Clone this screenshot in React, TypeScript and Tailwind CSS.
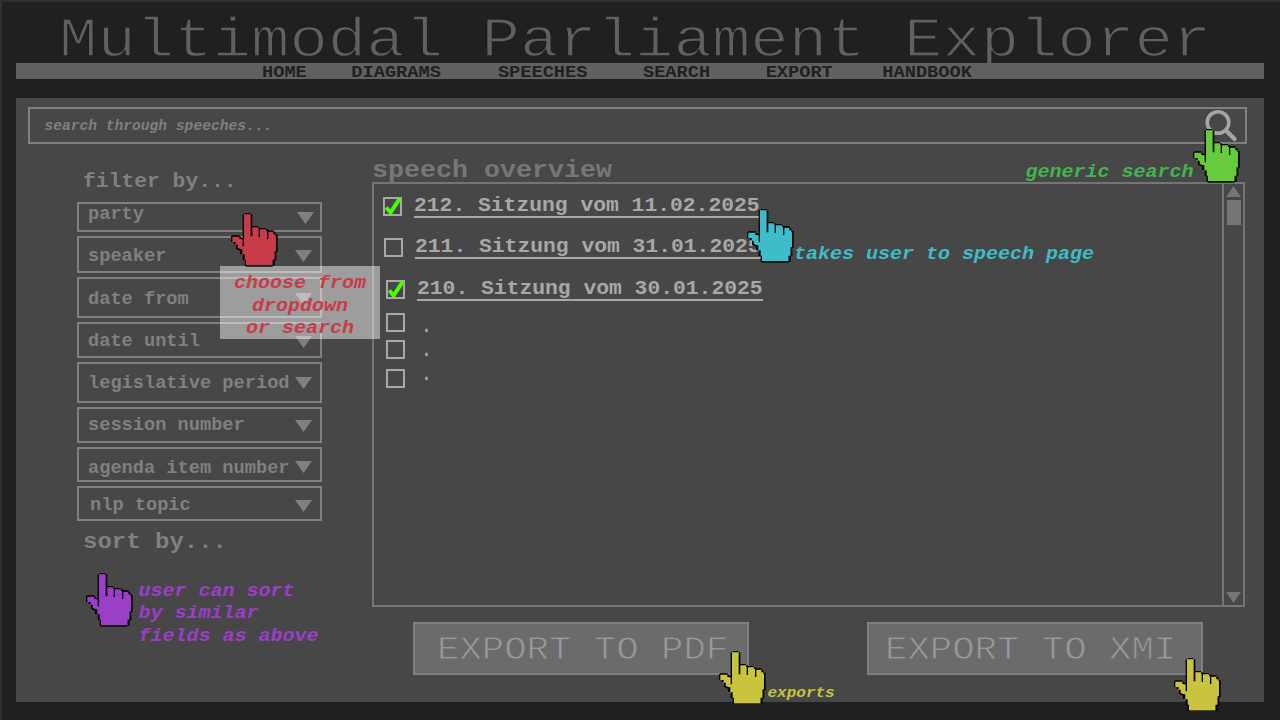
import React from "react";

const mono = "font-['Courier_New','Liberation_Mono',monospace]";

const navItems = [
  { label: "HOME", gap: "ml-[246px]" },
  { label: "DIAGRAMS", gap: "ml-[44.5px]" },
  { label: "SPEECHES", gap: "ml-[57px]" },
  { label: "SEARCH", gap: "ml-[55.5px]" },
  { label: "EXPORT", gap: "ml-[55.5px]" },
  { label: "HANDBOOK", gap: "ml-[49.5px]" },
];

const filters = [
  { label: "party", box: "h-[30px] pl-[9px] pr-[6px]", text: "", arrow: "mt-[8px]" },
  { label: "speaker", box: "h-[37px] pl-[9px] pr-[8px]", text: "mt-[8px]", arrow: "mt-[12px]" },
  { label: "date from", box: "h-[41px] pl-[9px] pr-[8px]", text: "mt-[10px]", arrow: "mt-[14px]" },
  { label: "date until", box: "h-[36px] pl-[9px] pr-[8px]", text: "mt-[7px]", arrow: "mt-[12px]" },
  { label: "legislative period", box: "h-[41px] pl-[9px] pr-[8px]", text: "mt-[9px]", arrow: "mt-[13px]" },
  { label: "session number", box: "h-[36px] pl-[9px] pr-[8px]", text: "mt-[6px]", arrow: "mt-[11px]" },
  { label: "agenda item number", box: "h-[35px] pl-[9px] pr-[8px]", text: "mt-[9px]", arrow: "mt-[12px]" },
  { label: "nlp topic", box: "h-[35px] pl-[11px] pr-[8px]", text: "mt-[7px]", arrow: "mt-[12px]" },
];

const sessions = [
  { label: "212. Sitzung vom 11.02.2025", checked: true, row: "mt-[9px] ml-[9px]", link: "ml-[12px]" },
  { label: "211. Sitzung vom 31.01.2025", checked: false, row: "mt-[16px] ml-[10px]", link: "ml-[12px]" },
  { label: "210. Sitzung vom 30.01.2025", checked: true, row: "mt-[17px] ml-[12px]", link: "ml-[12px]" },
];

const emptyRows = [
  { row: "mt-[8px]", dot: "mt-[1px]" },
  { row: "mt-[8px]", dot: "mt-[-2px]" },
  { row: "mt-[10px]", dot: "mt-[-7px]" },
];

function Hand({ color, className, open }: { color: string; className: string; open?: boolean }) {
  return (
    <svg viewBox="0 0 140 162" className={`absolute h-[54px] w-[46.67px] ${className}`}>
      <path
        fill={color}
        d="M38 3H61V41H84V47H110V55H130V62H137V118H131V142H125V157H44V141H37V125H29V109H18V95H10V87H3V69H27V75H38Z"
      />
      <path
        fill="#000"
        d="M41 0H58V4H41ZM35 4H39V100H35ZM59 4H64V70H59ZM64 39H81V43H64ZM81 43H87V47H81ZM83 47H87V72H83ZM87 45H105V49H87ZM105 49H112V54H105ZM108 54H112V78H108ZM112 52H128V56H112ZM127 56H133V64H127ZM133 62H137V68H133ZM135 66H140V117H135ZM131 115H136V142H131ZM125 140H131V158H125ZM41 140H45V158H41ZM35 124H41V141H35ZM27 109H34V124H27ZM25 108H30V114H25ZM15 95H20V108H15ZM19 106H25V111H19ZM8 87H14V94H8ZM0 69H4V87H0ZM3 67H26V71H3ZM25 71H30V78H25ZM29 75H36V79H29Z"
      />
      {!open && <path fill="#000" d="M44 157H125V161H44Z" />}
    </svg>
  );
}

function Checkbox({ checked }: { checked?: boolean }) {
  return (
    <span className="relative block h-[19px] w-[19px] shrink-0 border-2 border-[#a8a8a8]">
      {checked && (
        <svg viewBox="0 0 19 19" className="absolute -top-[2px] -left-[2px] h-[19px] w-[19px] overflow-visible">
          <path d="M3.2 10.5L7.6 15.6L16.9 1.4" fill="none" stroke="#48ff00" strokeWidth="3.9" />
        </svg>
      )}
    </span>
  );
}

function Triangle({ className, up }: { className: string; up?: boolean }) {
  return (
    <svg viewBox="0 0 17 12" preserveAspectRatio="none" className={`block shrink-0 ${className}`}>
      <path d={up ? "M0 12H17L8.5 0Z" : "M0 0H17L8.5 12Z"} fill="currentColor" />
    </svg>
  );
}

export default function App() {
  return (
    <div
      className={`relative h-[720px] w-[1280px] overflow-hidden border-t-2 border-l-2 border-[#303030] bg-[#202020] pr-[16px] pl-[14px] whitespace-pre ${mono}`}
    >
      <header>
        <div className="h-[61px] pl-[43px]">
          <h1 className="scale-y-[.88] text-[64px] leading-[79px] text-[#606060] [-webkit-text-stroke:1.6px_#202020]">
            Multimodal Parliament Explorer
          </h1>
        </div>
        <nav className="relative flex h-[16px] bg-[#606060] text-[18.67px] leading-[18px] font-bold text-[#202020]">
          {navItems.map((n) => (
            <a key={n.label} className={`block scale-y-[.93] ${n.gap}`}>
              {n.label}
            </a>
          ))}
        </nav>
      </header>

      <main className="mt-[19px] h-[604px] bg-[#474747] pt-[9px]">
        <div className="ml-[12px] flex h-[37px] w-[1219px] justify-between border-2 border-[#808080] pr-[7px] pl-[14.5px]">
          <span className="block scale-y-[.95] text-[14.6px] leading-[34px] font-bold text-[#808080] italic">
            search through speeches...
          </span>
          <svg viewBox="0 0 34 34" className="h-[34px] w-[34px] overflow-visible">
            <circle cx="14" cy="13.5" r="10.8" fill="none" stroke="#a5a5a5" strokeWidth="3.6" />
            <path d="M22 21.5L30.5 30" stroke="#a5a5a5" strokeWidth="4.4" strokeLinecap="round" />
          </svg>
        </div>

        <div className="flex">
          <aside className="ml-[61px] w-[245px] text-[#808080]">
            <h2 className="mt-[22px] ml-[6px] h-[36px] text-[21.33px] leading-[30px] font-bold">
              <span className="block scale-y-[.94]">filter by...</span>
            </h2>
            <div className="flex flex-col gap-[4px]">
              {filters.map((f) => (
                <div key={f.label} className={`flex justify-between border-2 border-[#808080] ${f.box}`}>
                  <span className={`block h-[20px] scale-y-[.94] text-[18.67px] leading-[20px] font-bold ${f.text}`}>
                    {f.label}
                  </span>
                  <Triangle className={`h-[12px] w-[17px] ${f.arrow}`} />
                </div>
              ))}
            </div>
            <h2 className="mt-[5px] ml-[6px] scale-y-[.94] text-[24px] leading-[32px] font-bold">sort by...</h2>
          </aside>

          <section className="ml-[50px] w-[873px]">
            <h2 className="mt-[9px] h-[29px] text-[26.67px] leading-[37px] font-bold text-[#777]">
              <span className="block scale-y-[.92]">speech overview</span>
            </h2>
            <div className="flex h-[425px] border-2 border-[#757575]">
              <div className="flex-1 overflow-hidden pt-[4px] text-[#a8a8a8]">
                {sessions.map((s) => (
                  <div key={s.label} className={`flex h-[25px] ${s.row}`}>
                    <Checkbox checked={s.checked} />
                    <a className={`-mt-[5px] block h-[26px] border-b-2 border-[#a8a8a8] ${s.link}`}>
                      <span className="block scale-y-[.95] text-[21.33px] leading-[26px] font-bold">{s.label}</span>
                    </a>
                  </div>
                ))}
                {emptyRows.map((r, i) => (
                  <div key={i} className={`ml-[12px] flex h-[19px] ${r.row}`}>
                    <Checkbox />
                    <span className={`ml-[15px] block text-[21.33px] leading-[24px] ${r.dot}`}>.</span>
                  </div>
                ))}
              </div>
              <div className="flex w-[21px] flex-col items-center border-l-2 border-[#757575] text-[#757575]">
                <Triangle up className="mt-[2px] h-[11px] w-[15px]" />
                <div className="mt-[3px] h-[25px] w-[14px] bg-[#757575]" />
                <Triangle className="mt-auto mb-[2px] h-[11px] w-[15px]" />
              </div>
            </div>
            <div className="mt-[15px] ml-[41px] flex gap-[118px] text-[37.33px] leading-[53px] text-[#999]">
              <button className="block h-[53px] w-[336px] border-2 border-[#808080] bg-[#6b6b6b] pl-[22px] text-left">
                <span className="block scale-y-[.89] [-webkit-text-stroke:.9px_#6b6b6b]">EXPORT TO PDF</span>
              </button>
              <button className="block h-[53px] w-[336px] border-2 border-[#808080] bg-[#6b6b6b] pl-[16px] text-left">
                <span className="block scale-y-[.89] [-webkit-text-stroke:.9px_#6b6b6b]">EXPORT TO XMI</span>
              </button>
            </div>
          </section>
        </div>
      </main>

      <div className="absolute top-[264px] left-[218px] h-[73px] w-[160px] bg-white/47 pt-[6px] text-center text-[20px] leading-[22.5px] font-bold text-[#c83c4a] italic">
        <div className="scale-y-[.94]">choose from</div>
        <div className="scale-y-[.94]">dropdown</div>
        <div className="scale-y-[.94]">or search</div>
      </div>
      <div className="absolute top-[156.5px] left-[1023.5px] scale-y-[.94] text-[20px] leading-[26px] font-bold text-[#44b54e] italic">
        generic search
      </div>
      <div className="absolute top-[238.5px] left-[792px] scale-y-[.94] text-[20px] leading-[26px] font-bold text-[#3ebcc9] italic">
        takes user to speech page
      </div>
      <div className="absolute top-[577.7px] left-[136.5px] text-[20px] leading-[22.5px] font-bold text-[#9b3ec8] italic">
        <div className="scale-y-[.94]">user can sort</div>
        <div className="scale-y-[.94]">by similar</div>
        <div className="scale-y-[.94]">fields as above</div>
      </div>
      <div className="absolute top-[681px] left-[765.5px] scale-y-[.94] text-[16px] leading-[20px] font-bold text-[#c9c43e] italic">
        exports
      </div>

      <Hand color="#c83c4a" className="top-[210.7px] left-[229.4px]" />
      <Hand color="#66cc3e" className="top-[127px] left-[1191.4px]" />
      <Hand color="#3ebcc9" className="top-[207px] left-[745.4px]" />
      <Hand color="#9b3ec8" className="top-[571px] left-[84.4px]" />
      <Hand open color="#c9c43e" className="top-[649px] left-[717.4px]" />
      <Hand open color="#c9c43e" className="top-[656px] left-[1172.4px]" />
    </div>
  );
}
